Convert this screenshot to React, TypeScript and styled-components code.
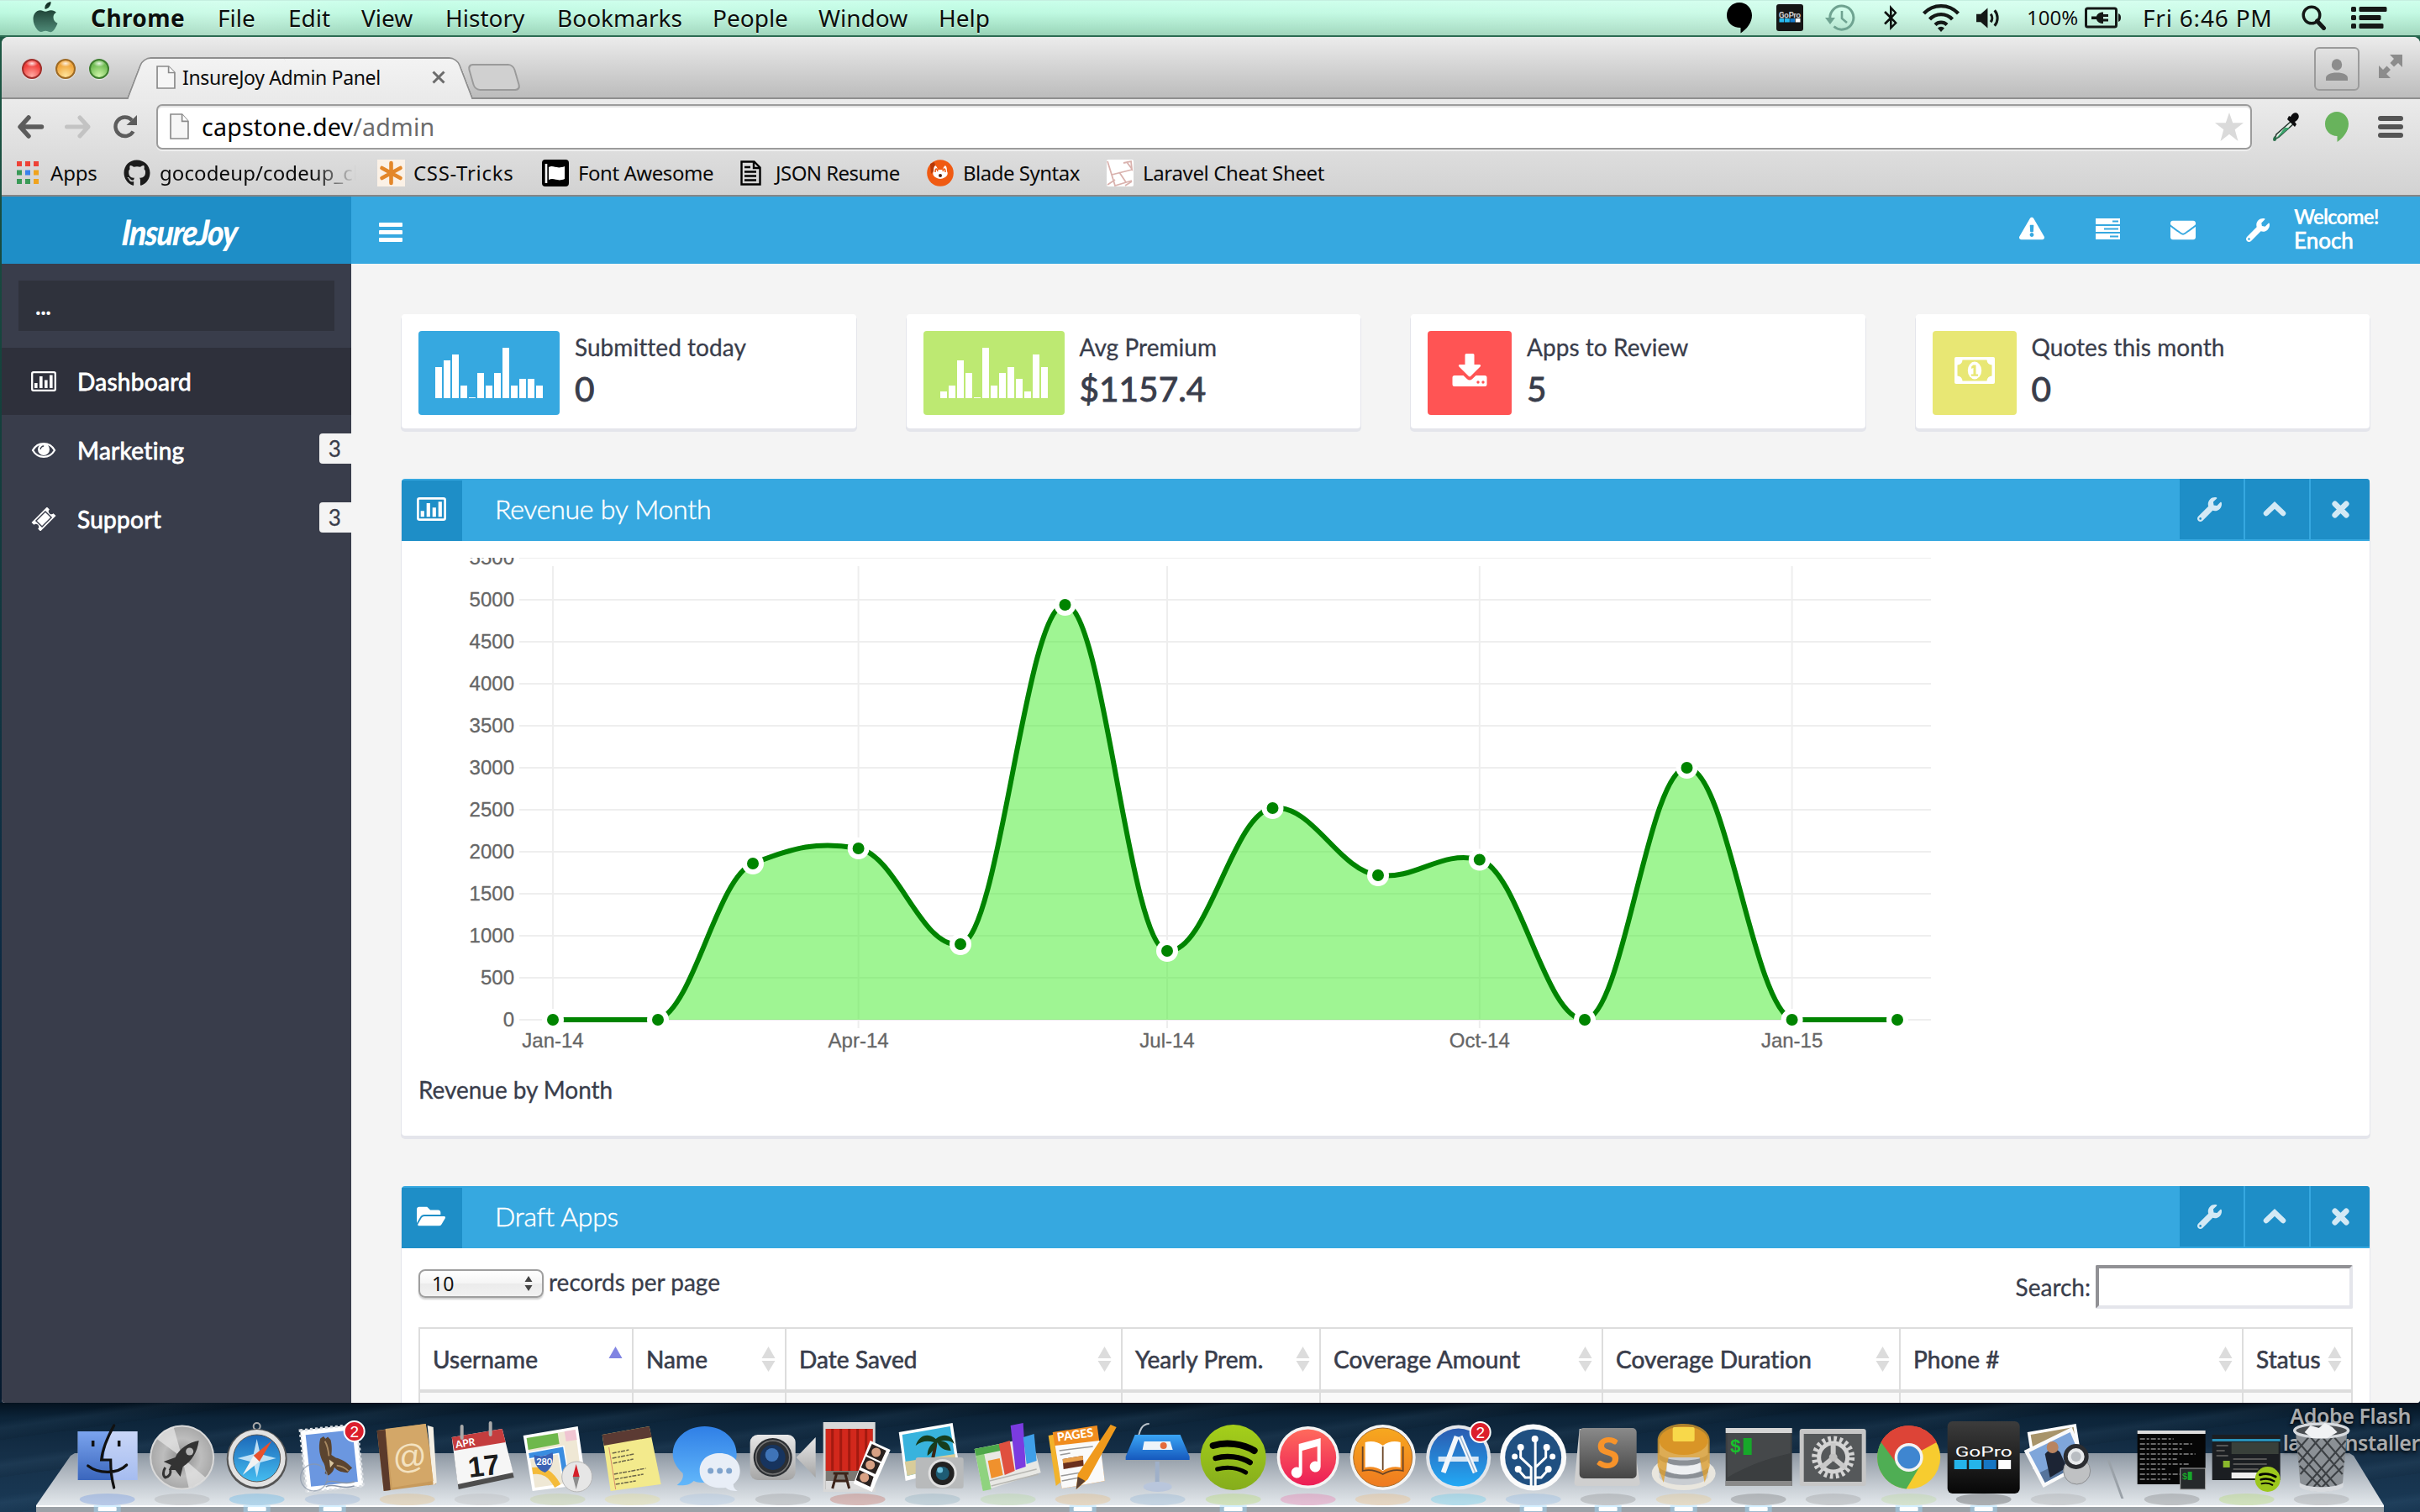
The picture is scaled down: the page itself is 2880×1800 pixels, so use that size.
import React from "react";
import styled, { createGlobalStyle, css } from "styled-components";
import {
  FaBluetoothB,
  FaEnvelope,
  FaExclamationTriangle,
  FaFolderOpen,
  FaGithub,
  FaWrench,
} from "react-icons/fa";

const system = `"Noto Sans", "Open Sans", sans-serif`;
const lato = `Lato, "Open Sans", sans-serif`;

const colors = {
  blue: "#36a8e0",
  blueDark: "#1e8ec7",
  slate: "#393d4b",
  slateDark: "#2f323c",
  page: "#f4f4f4",
  shadow: "#e4e5eb",
  line: "#dddddd",
};

const GlobalStyle = createGlobalStyle`
  * { box-sizing: border-box; }
  html, body { margin: 0; padding: 0; width: 2880px; height: 1800px; overflow: hidden; background: #0c2238; }
  svg { display: block; }
`;

/* ---------- desktop ---------- */

const Desktop = styled.div`
  display: flex;
  flex-direction: column;
  width: 2880px;
  height: 1800px;
  overflow: hidden;
  background: linear-gradient(180deg, #1f5b45 0, #14403c 500px, #0d2c44 1100px, #061a2e 1672px, #17324b 1740px, #1b3a56 1800px);
`;

const MenuBar = styled.header`
  display: flex;
  flex: none;
  align-items: center;
  height: 44px;
  padding: 0 0 1px 38px;
  color: #0b0f0d;
  font: 28px/38px ${system};
  border-top: 1px solid #c5efe0;
  border-bottom: 2px solid #2c6b52;
  background:
    linear-gradient(90deg, rgba(255,255,255,0) 0%, rgba(255,255,255,.22) 9%, rgba(255,255,255,0) 17%, rgba(255,255,255,.12) 28%, rgba(255,255,255,0) 40%, rgba(255,255,255,.1) 55%, rgba(255,255,255,.3) 82%, rgba(255,255,255,.1) 100%),
    linear-gradient(180deg, #c9ffea 0%, #bdf9e0 35%, #a0dcc0 85%, #97d0b5 100%);
`;

const Slot = styled.div<{ $w: number; $bold?: boolean; $size?: number; $ls?: number }>`
  flex: none;
  width: ${(p) => p.$w}px;
  white-space: nowrap;
  text-shadow: 0 1px 1px rgba(255, 255, 255, 0.55);
  font-weight: ${(p) => (p.$bold ? 700 : 400)};
  font-size: ${(p) => p.$size ?? 28}px;
  letter-spacing: ${(p) => p.$ls ?? 0}px;
`;

const Spacer = styled.div`
  flex: 1;
`;

/* ---------- browser chrome ---------- */

const Window = styled.section`
  display: flex;
  flex: none;
  flex-direction: column;
  height: 1626px;
  margin-left: 2px;
  overflow: hidden;
  border-radius: 8px 8px 4px 4px;
  background: ${colors.page};
`;

const TabStrip = styled.div`
  display: flex;
  flex: none;
  align-items: flex-end;
  height: 74px;
  padding-left: 24px;
  border-bottom: 2px solid #8e8e8e;
  background: linear-gradient(180deg, #ececec 0%, #d6d6d6 45%, #bcbcbc 100%);
`;

const Lights = styled.div`
  display: flex;
  gap: 16px;
  width: 130px;
  padding-bottom: 22px;
`;

const Light = styled.i<{ $hue: string; $edge: string; $glow: string }>`
  width: 24px;
  height: 24px;
  border: 2px solid ${(p) => p.$edge};
  border-radius: 50%;
  background:
    radial-gradient(ellipse 7px 4px at 50% 18%, rgba(255,255,255,.85), rgba(255,255,255,0)),
    radial-gradient(circle at 50% 90%, ${(p) => p.$glow} 0, ${(p) => p.$hue} 65%);
  box-shadow: 0 1px 1px rgba(255, 255, 255, 0.7);
`;

const Tab = styled.div`
  position: relative;
  z-index: 0;
  display: flex;
  align-items: center;
  width: 394px;
  height: 50px;
  margin: 0 0 -2px 4px;
  padding: 0 24px 3px 26px;
  font: 23px/30px ${system};
  color: #0c0c0c;
  letter-spacing: -0.35px;
  white-space: nowrap;

  &::before,
  &::after {
    content: "";
    position: absolute;
    z-index: -1;
    top: 0;
    bottom: 0;
    width: 52%;
    border-top: 2px solid #8e8e8e;
    background: linear-gradient(180deg, #f3f3f3, #eaeaea);
  }
  &::before {
    left: 0;
    border-left: 2px solid #8e8e8e;
    border-radius: 10px 0 0 0;
    transform: skewX(-21deg);
  }
  &::after {
    right: 0;
    border-right: 2px solid #8e8e8e;
    border-radius: 0 10px 0 0;
    transform: skewX(21deg);
  }
`;

const TabTitle = styled.span`
  flex: 1;
  padding-left: 8px;
`;

const NewTab = styled.div`
  width: 56px;
  height: 32px;
  margin: 0 0 8px 6px;
  border: 2px solid #9a9a9a;
  border-radius: 7px;
  background: #d0d0d0;
  transform: skewX(16deg);
`;

const ProfileButton = styled.div`
  display: flex;
  align-items: flex-end;
  justify-content: center;
  width: 54px;
  height: 52px;
  margin: 0 22px 8px 0;
  padding-bottom: 10px;
  border: 2px solid #9b9b9b;
  border-radius: 6px;
`;

const ExpandSlot = styled.div`
  width: 50px;
  padding-bottom: 22px;
`;

const Bars = styled.div`
  flex: none;
  background: linear-gradient(180deg, #ebebeb, #d2d2d2);
  border-bottom: 2px solid #858585;
`;

const Toolbar = styled.div`
  display: flex;
  align-items: center;
  height: 62px;
  padding: 6px 18px 2px 18px;
`;

const NavIcon = styled.div<{ $w: number }>`
  flex: none;
  width: ${(p) => p.$w}px;
`;

const Omnibox = styled.div`
  display: flex;
  flex: none;
  align-items: center;
  width: 2494px;
  height: 54px;
  padding: 0 8px 1px 14px;
  border: 2px solid #9c9c9c;
  border-radius: 7px;
  background: #fff;
  box-shadow: inset 0 2px 1px #e4e4e4, 0 2px 0 #efefef;
  font: 28.6px/36px ${system};
  letter-spacing: 0.2px;
  color: #6b6b6b;
`;

const Url = styled.span`
  flex: 1;
  padding-left: 15px;
  b {
    font-weight: 400;
    color: #000;
  }
`;

const Bookmarks = styled.nav`
  display: flex;
  align-items: center;
  height: 52px;
  padding-left: 18px;
  font: 24px/34px ${system};
  color: #0a0a0a;
`;

const Bookmark = styled.div<{ $w: number; $gap: number; $ls?: number; $fade?: boolean }>`
  display: flex;
  flex: none;
  align-items: center;
  gap: ${(p) => p.$gap}px;
  width: ${(p) => p.$w}px;
  white-space: nowrap;
  letter-spacing: ${(p) => p.$ls ?? 0}px;
  svg {
    flex: none;
  }
  ${(p) =>
    p.$fade &&
    css`
      span {
        mask-image: linear-gradient(90deg, #000 78%, transparent 99%);
      }
    `}
`;

/* ---------- page ---------- */

const TopBar = styled.div`
  display: flex;
  flex: none;
  height: 80px;
  background: ${colors.blue};
  color: #fff;
`;

const Logo = styled.div`
  display: flex;
  align-items: center;
  justify-content: center;
  width: 416px;
  padding: 4px 0 0 8px;
  background: ${colors.blueDark};
  span {
    font: italic 900 42px/60px ${lato};
    letter-spacing: -1.5px;
    transform: scaleX(0.88) skewX(-5deg);
  }
`;

const TopTools = styled.div`
  display: flex;
  flex: 1;
  align-items: center;
  padding: 0 0 4px 33px;
`;

const Burger = styled.div`
  display: flex;
  flex-direction: column;
  gap: 4px;
  padding-top: 8px;
  i {
    width: 28px;
    height: 5px;
    border-radius: 1px;
    background: #fff;
  }
`;

const TopIcon = styled.div`
  width: 90px;
`;

const Welcome = styled.div`
  display: flex;
  flex-direction: column;
  width: 150px;
  margin-left: -33px;
  font: 700 24px/28px ${lato};
  letter-spacing: -0.85px;
  white-space: nowrap;
  b {
    font-weight: 400;
    font-size: 26px;
    letter-spacing: 0;
    -webkit-text-stroke: 0.7px #fff;
  }
`;

const Body = styled.div`
  display: flex;
  flex: 1;
  min-height: 0;
`;

const Sidebar = styled.aside`
  flex: none;
  width: 416px;
  background: ${colors.slate};
  color: #fff;
  font: 28px/40px ${lato};
`;

const SideSearch = styled.div`
  height: 60px;
  margin: 20px;
  padding-left: 20px;
  background: ${colors.slateDark};
  font-weight: 700;
  line-height: 60px;
  letter-spacing: -0.5px;
`;

const SideItem = styled.div<{ $active?: boolean }>`
  display: flex;
  align-items: center;
  height: 80px;
  margin-bottom: 2px;
  padding: 0 0 1px 35px;
  background: ${(p) => (p.$active ? "#2e303b" : "transparent")};
  letter-spacing: 0.3px;
  -webkit-text-stroke: 0.8px #fff;
  svg {
    flex: none;
    width: 30px;
  }
  span {
    flex: 1;
    padding-left: 25px;
  }
`;

const SideBadge = styled.em`
  width: 38px;
  height: 36px;
  margin-bottom: 3px;
  padding-right: 1px;
  border-radius: 4px 0 0 4px;
  background: ${colors.page};
  color: ${colors.slate};
  font: 26px/36px ${lato};
  text-align: center;
  -webkit-text-stroke: 0.3px ${colors.slate};
`;

const Content = styled.main`
  display: flex;
  flex: 1;
  flex-direction: column;
  gap: 60px;
  padding: 60px 60px 0;
  background: ${colors.page};
  color: ${colors.slate};
  font: 28px/40px ${lato};
`;

const Cards = styled.div`
  display: grid;
  grid-template-columns: repeat(4, 1fr);
  gap: 60px;
`;

const Card = styled.div`
  display: flex;
  height: 136px;
  padding: 20px;
  border-radius: 4px;
  background: #fff;
  box-shadow: 0 3px 0 1px ${colors.shadow};
`;

const Tile = styled.div<{ $bg: string; $w: number }>`
  display: flex;
  flex: none;
  justify-content: center;
  align-items: center;
  width: ${(p) => p.$w}px;
  height: 100px;
  padding-bottom: 6px;
  border-radius: 4px;
  background: ${(p) => p.$bg};
`;

const Spark = styled.div`
  display: flex;
  align-items: flex-end;
  align-self: flex-start;
  gap: 2px;
  height: 60px;
  margin-top: 20px;
`;

const SparkBar = styled.i`
  width: 8px;
  background: #fff;
`;

const CardText = styled.div`
  padding-left: 18px;
  white-space: nowrap;
  letter-spacing: 0.05px;
`;

const CardLabel = styled.div`
  line-height: 38px;
  -webkit-text-stroke: 0.3px ${colors.slate};
`;

const CardValue = styled.div`
  font-size: 40.5px;
  line-height: 62px;
  -webkit-text-stroke: 0.9px ${colors.slate};
`;

const Panel = styled.section<{ $h?: number }>`
  flex: none;
  height: ${(p) => (p.$h ? `${p.$h}px` : "auto")};
  border-radius: 4px;
  background: #fff;
  box-shadow: 0 3px 0 1px ${colors.shadow};
`;

const PanelHead = styled.div`
  display: flex;
  height: 74px;
  overflow: hidden;
  border-radius: 4px 4px 0 0;
  background: ${colors.blue};
  color: #fff;
`;

const HeadIcon = styled.div`
  display: flex;
  align-items: center;
  width: 72px;
  height: 72px;
  margin-top: 2px;
  padding: 0 0 4px 18px;
  background: ${colors.blueDark};
`;

const HeadTitle = styled.h2`
  flex: 1;
  margin: 0;
  padding-left: 39px;
  font: 300 32px/72px ${lato};
  letter-spacing: -0.25px;
  -webkit-text-stroke: 0.5px #fff;
`;

const HeadButton = styled.div<{ $w: number; $pad?: number }>`
  display: flex;
  align-items: center;
  justify-content: center;
  width: ${(p) => p.$w}px;
  height: 72px;
  margin-left: 2px;
  padding-right: ${(p) => p.$pad ?? 0}px;
  background: ${colors.blueDark};
  color: #d3e9f5;
`;

const PanelBody = styled.div`
  padding: 20px;
`;

const Caption = styled.div`
  line-height: 38px;
  letter-spacing: -0.05px;
  -webkit-text-stroke: 0.3px ${colors.slate};
`;

const TableTools = styled.div`
  display: flex;
  height: 52px;
  -webkit-text-stroke: 0.3px ${colors.slate};
`;

const RecordsPer = styled.div`
  display: flex;
  flex: 1;
  align-items: center;
  gap: 6px;
  height: 40px;
`;

const Select = styled.div`
  display: flex;
  align-items: center;
  justify-content: space-between;
  width: 149px;
  height: 34px;
  margin-top: 4px;
  padding: 0 11px 0 14px;
  border: 2px solid #9f9f9f;
  border-radius: 8px;
  background: linear-gradient(180deg, #fff 0%, #f5f5f5 48%, #ebebeb 52%, #f2f2f2 100%);
  box-shadow: 0 2px 2px rgba(0, 0, 0, 0.2);
  color: #111;
  font: 23px/28px ${system};
  -webkit-text-stroke: 0;
`;

const SearchLabel = styled.label`
  display: flex;
  align-items: center;
  gap: 6px;
`;

const SearchBox = styled.div`
  width: 306px;
  height: 52px;
  border: 4px solid;
  border-color: #919195 ${colors.shadow} ${colors.shadow} #919195;
  border-radius: 2px;
`;

const TableBox = styled.div`
  margin-top: 22px;
  border-top: 2px solid ${colors.line};
  border-right: 2px solid ${colors.line};
`;

const Row = styled.div<{ $bg: string; $h: number }>`
  display: grid;
  grid-template-columns: 254px 182px 400px 236px 336px 354px 408px 1fr;
  height: ${(p) => p.$h}px;
  background: ${(p) => p.$bg};
  & + & {
    border-top: 4px solid ${colors.line};
  }
`;

const Cell = styled.div`
  display: flex;
  align-items: center;
  justify-content: space-between;
  padding: 0 11px 1px 15px;
  border-left: 2px solid ${colors.line};
  white-space: nowrap;
  letter-spacing: 0.08px;
  -webkit-text-stroke: 0.6px ${colors.slate};
`;

/* ---------- dock ---------- */

const DockArea = styled.footer`
  position: relative;
  flex: 1;
  background:
    repeating-linear-gradient(172deg, rgba(255,255,255,0) 0 22px, rgba(120,160,190,.07) 30px, rgba(0,0,0,.06) 44px),
    linear-gradient(180deg, #04121f 0, #0c2439 18px, #152f47 60px, #1a3a57 130px);
`;

const Shelf = styled.div`
  position: absolute;
  left: 43px;
  top: 60px;
  width: 2794px;
  height: 62px;
  clip-path: polygon(41px 3px, 46px 0, 2753px 0, 2758px 3px, 100% 100%, 0 100%);
  background: linear-gradient(180deg, #8d97a2 0%, #a9b1ba 30%, #ccd2d8 70%, #e3e8ec 100%);
`;

const ShelfEdge = styled.div`
  position: absolute;
  left: 43px;
  top: 122px;
  width: 2794px;
  height: 8px;
  border-top: 2px solid #fff;
  background: #9ba1a7;
`;

const DesktopLabel = styled.div`
  position: absolute;
  right: 0;
  top: -1px;
  color: #a9abad;
  font: 600 25px/32px ${system};
  letter-spacing: -0.4px;
  text-align: right;
  white-space: nowrap;
  text-shadow: 0 2px 4px #000;
  span {
    display: block;
    padding-right: 11px;
  }
  span + span {
    padding: 0;
  }
`;

const DockRow = styled.div`
  position: absolute;
  left: 82.5px;
  top: 20px;
  display: flex;
`;

const DockCell = styled.svg`
  flex: none;
  width: 89.35px;
  height: 110px;
  overflow: visible;
`;

const DockGap = styled.div`
  width: 45px;
  height: 110px;
  display: flex;
  justify-content: center;
  align-items: center;
  i {
    width: 3px;
    height: 46px;
    margin-top: 32px;
    background: #9aa1a8;
    transform: skewX(20deg);
  }
`;

/* ---------- small drawings ---------- */

const PageIcon = ({ w, h }: { w: number; h: number }) => (
  <svg width={w} height={h} viewBox="0 0 22 30" preserveAspectRatio="none">
    <path d="M1 1h13l7 8v20H1z" fill="#f6f6f6" stroke="#8a8a8a" strokeWidth="1.6" />
    <path d="M14 1v8h7" fill="#fff" stroke="#8a8a8a" strokeWidth="1.6" />
  </svg>
);

const ChartIcon = ({ w = 30, h = 24 }: { w?: number; h?: number }) => (
  <svg width={w} height={h} viewBox="0 0 30 24" preserveAspectRatio="none">
    <rect x="1.2" y="1.2" width="27.6" height="21.6" rx="1.6" fill="none" stroke="#fff" strokeWidth="2.3" />
    <path d="M4 14h3.600v6H4zM10 6h3.600v14H10zM16 10.500h3.600V20H16zM22 4.500h3.600V20H22z" fill="#fff" />
  </svg>
);

const EyeIcon = () => (
  <svg width="30" height="20" viewBox="0 0 30 20">
    <path d="M2 10C8 -.5 22 -.5 28 10 22 20.500 8 20.500 2 10z" fill="none" stroke="#fff" strokeWidth="2.2" />
    <circle cx="15" cy="9" r="7" fill="#fff" />
    <path d="M11.200 9a4 4 0 0 1 4-4" fill="none" stroke={colors.slate} strokeWidth="1.4" />
  </svg>
);

const TicketIcon = () => (
  <svg width="30" height="28" viewBox="0 0 30 28">
    <g transform="rotate(-45 15 14)">
      <path d="M2 6.500h26v4.200a3.300 3.300 0 0 0 0 6.600v4.200H2v-4.200a3.300 3.300 0 0 0 0-6.600z" fill="#fff" />
      <rect x="7.200" y="9" width="15.600" height="10" fill="none" stroke={colors.slate} strokeWidth="1.400" />
    </g>
  </svg>
);

const TasksIcon = () => (
  <svg width="31" height="25" viewBox="0 0 31 25">
    <path d="M1 0h29v7H1zM1 9h29v7H1zM1 18h29v7H1z" fill="#fff" />
    <path d="M21 2.600h7v1.800h-7zM11 11.600h17v1.800H11zM18 20.600h10v1.800H18z" fill={colors.blue} />
  </svg>
);

const DownloadIcon = () => (
  <svg width="42" height="40" viewBox="0 0 42 40">
    <path d="M17 0h8a1.500 1.500 0 0 1 1.500 1.500V13h6.300a1.400 1.400 0 0 1 1 2.300L22 27a1.500 1.500 0 0 1-2 0L8.200 15.300a1.400 1.400 0 0 1 1-2.300h6.300V1.500A1.500 1.500 0 0 1 17 0z" fill="#fff" />
    <path d="M3 26h10.500l4.500 4.300a4.200 4.200 0 0 0 6 0L28.500 26H39a2.500 2.500 0 0 1 2.500 2.500v8A2.500 2.500 0 0 1 39 39H3a2.500 2.500 0 0 1-2.500-2.500v-8A2.500 2.500 0 0 1 3 26z" fill="#fff" />
    <circle cx="31" cy="34" r="1.700" fill="#ff5454" />
    <circle cx="37" cy="34" r="1.700" fill="#ff5454" />
  </svg>
);

const MoneyIcon = () => (
  <svg width="48" height="32" viewBox="0 0 48 32">
    <rect width="48" height="32" rx="2" fill="#fff" />
    <path d="M9.500 3.400h29a6 6 0 0 0 6 6v13.200a6 6 0 0 0-6 6h-29a6 6 0 0 0-6-6V9.400a6 6 0 0 0 6-6z" fill="#e8e774" />
    <ellipse cx="24" cy="16" rx="8.200" ry="10.400" fill="#fff" />
    <path d="M22.300 9.500h3.200v11h2.600v2.200h-8.300v-2.200h2.700v-7.600l-2.400 1.200v-2.500z" fill="#e8e774" />
  </svg>
);

const SortIcon = ({ active }: { active?: boolean }) => (
  <svg width="17" height="30" viewBox="0 0 16 30">
    <path d="M8 0l8 14H0z" fill={active ? "#8084e2" : "#dcdcdc"} />
    {!active && <path d="M8 30l8-13H0z" fill="#dcdcdc" />}
  </svg>
);

const AppleLogo = () => (
  <svg width="32" height="38" viewBox="0 0 32 38">
    <defs>
      <linearGradient id="apple" x1="0" y1="0" x2="0" y2="1">
        <stop offset="0" stopColor="#0e2a20" />
        <stop offset="1" stopColor="#4f8a77" />
      </linearGradient>
    </defs>
    <path
      d="M22.500 0c.4 3-1 5.400-2.600 6.900-1.500 1.300-3.200 1.900-4.600 1.700-.3-3 1.100-5.200 2.500-6.500C19.200.9 21 .1 22.500 0zM28.900 12.800c-2.300 1.500-3.500 3.400-3.400 6 .1 3.400 1.900 5.700 5 7-1.300 3.600-3 6.500-5 8.600-1.300 1.300-2.700 1.900-4.200 1.700-1.900-.2-3-1.300-5-1.300s-3.400 1.100-5.300 1.300c-1.700.1-3.100-.8-4.500-2.500C3.200 29.700 1.500 25 1.500 20.500c0-6 3.700-10.200 8.400-10.300 2.500 0 4 1.600 6.200 1.600s3.700-1.700 6.800-1.600c2.400.1 4.500 1.100 6 2.600z"
      fill="url(#apple)"
    />
  </svg>
);

const GoProMini = () => (
  <svg width="32" height="32" viewBox="0 0 32 32">
    <rect width="32" height="32" rx="3" fill="#151515" />
    <text x="16" y="16" textAnchor="middle" fontFamily="Roboto, sans-serif" fontSize="9.500" fill="#eee" textLength="26">
      GoPro
    </text>
    <path d="M3.500 17h5.800v4.500H3.500zM10 17h5.800v4.500H10z" fill="#28b9ee" />
    <path d="M16.300 17h5.800v4.500h-5.800z" fill="#1479c9" />
    <path d="M22.700 17h5.800v4.500h-5.800z" fill="#fff" />
  </svg>
);

const ink = "#141816";

const menus: [string, number, boolean?][] = [
  ["Chrome", 151, true],
  ["File", 84],
  ["Edit", 87],
  ["View", 100],
  ["History", 133],
  ["Bookmarks", 185],
  ["People", 126],
  ["Window", 143],
  ["Help", 80],
];

const TopMenu = () => (
  <MenuBar>
    <Slot $w={70}>
      <AppleLogo />
    </Slot>
    {menus.map(([name, w, bold]) => (
      <Slot key={name} $w={w} $bold={bold} $ls={bold ? 0.4 : 0}>
        {name}
      </Slot>
    ))}
    <Spacer />
    <Slot $w={60}>
      <svg width="32" height="38" viewBox="0 0 32 38">
        <path d="M16 1c8.500 0 15 6.800 15 15.200C31 25 25 32.500 17.500 37.500V31C8 31 1 25 1 16.200 1 7.800 7.500 1 16 1z" fill="#000" />
      </svg>
    </Slot>
    <Slot $w={58}>
      <GoProMini />
    </Slot>
    <Slot $w={69}>
      <svg width="36" height="32" viewBox="0 0 36 32" fill="none" stroke="#6fa391" strokeWidth="3">
        <path d="M6 18a14 14 0 1 1 4.500 8.500" />
        <path d="M20 8v9l6 5" strokeWidth="2.600" />
        <path d="M0 16h12l-6 8z" fill="#6fa391" stroke="none" />
      </svg>
    </Slot>
    <Slot $w={46}>
      <FaBluetoothB size={30} style={{ marginLeft: -6 }} />
    </Slot>
    <Slot $w={64}>
      <svg width="46" height="34" viewBox="0 0 46 34" fill="none" stroke={ink} strokeWidth="4.200">
        <path d="M2.500 12a28 28 0 0 1 41 0" />
        <path d="M9.500 19a18.500 18.500 0 0 1 27 0" />
        <path d="M16 25.500a10 10 0 0 1 14 0" />
        <path d="M23 34l-4-4.500a5.500 5.500 0 0 1 8 0z" fill={ink} stroke="none" />
      </svg>
    </Slot>
    <Slot $w={61}>
      <svg width="31" height="27" viewBox="0 0 30 26" fill="none" stroke={ink} strokeWidth="3">
        <path d="M1 8.500h5l8-7v23l-8-7H1z" fill={ink} stroke="none" />
        <path d="M17.500 8.500a7 7 0 0 1 0 9" />
        <path d="M22 4a14 14 0 0 1 0 18" />
      </svg>
    </Slot>
    <Slot $w={68} $size={24}>
      100%
    </Slot>
    <Slot $w={70}>
      <svg width="46" height="26" viewBox="0 0 46 26">
        <rect x="2.500" y="2" width="36" height="22" rx="2" fill="none" stroke={ink} strokeWidth="3" />
        <path d="M41 8c4 1 4 9 0 10z" fill={ink} />
        <path d="M9 11.500h6c1-3.500 4-5 8-5V9h6v3h-6v2.500h6v3h-6v2.500c-4 0-7-1.500-8-5H9z" fill={ink} />
      </svg>
    </Slot>
    <Slot $w={187} $ls={0.8}>
      Fri 6:46 PM
    </Slot>
    <Slot $w={60}>
      <svg width="32" height="30" viewBox="0 0 32 30" fill="none" stroke={ink}>
        <circle cx="14" cy="12" r="9.800" strokeWidth="3.400" />
        <path d="M20.500 19l8 8.500" strokeWidth="5" strokeLinecap="round" />
      </svg>
    </Slot>
    <Slot $w={83}>
      <svg width="44" height="28" viewBox="0 0 44 28" fill={ink}>
        <rect x="1" y="1" width="6" height="6" rx="1.500" />
        <rect x="1" y="11" width="6" height="6" rx="1.500" />
        <rect x="1" y="21" width="6" height="6" rx="1.500" />
        <rect x="10.500" y="1" width="33" height="6" rx="1.500" />
        <rect x="10.500" y="11" width="26" height="6" rx="1.500" />
        <rect x="10.500" y="21" width="29" height="6" rx="1.500" />
      </svg>
    </Slot>
  </MenuBar>
);

const BrowserChrome = () => (
  <>
    <TabStrip>
      <Lights>
        <Light $hue="#f0403c" $glow="#ffa8a0" $edge="#a1302c" />
        <Light $hue="#f0a63c" $glow="#ffe39a" $edge="#9e6a24" />
        <Light $hue="#72bd55" $glow="#cdf5a8" $edge="#3f7f30" />
      </Lights>
      <Tab>
        <PageIcon w={23} h={28} />
        <TabTitle>InsureJoy Admin Panel</TabTitle>
        <svg width="16" height="16" viewBox="0 0 16 16" stroke="#6b6b6b" strokeWidth="3">
          <path d="M1.500 1.500l13 13M14.500 1.500l-13 13" />
        </svg>
      </Tab>
      <NewTab />
      <Spacer />
      <ProfileButton>
        <svg width="26" height="26" viewBox="0 0 26 26" fill="#8c8c8c">
          <ellipse cx="13" cy="7" rx="6.200" ry="6.800" />
          <path d="M0 26v-3c0-4 5-6.500 13-6.500s13 2.500 13 6.500v3z" />
        </svg>
      </ProfileButton>
      <ExpandSlot>
        <svg width="30" height="30" viewBox="0 0 30 30" fill="#8c8c8c">
          <path d="M14 1h15v15l-5-5-5 4.500L14.500 11 19 6z" />
          <path d="M1 14l5 5 4.500-4.500L15 19l-5 5 5 5H1z" />
        </svg>
      </ExpandSlot>
    </TabStrip>
    <Bars>
      <Toolbar>
        <NavIcon $w={56}>
          <svg width="33" height="28" viewBox="0 0 33 28" fill="none" stroke="#5c5c5c" strokeWidth="5.500" strokeLinecap="round" strokeLinejoin="round">
            <path d="M14 3L4 14l10 11M5 14h24.500" />
          </svg>
        </NavIcon>
        <NavIcon $w={58}>
          <svg width="33" height="28" viewBox="0 0 33 28" fill="none" stroke="#c3c3c3" strokeWidth="5" strokeLinecap="round" strokeLinejoin="round">
            <path d="M19 3l10 11-10 11M28 14H3.500" />
          </svg>
        </NavIcon>
        <NavIcon $w={52}>
          <svg width="30" height="28" viewBox="0 0 30 28" fill="none" stroke="#5c5c5c" strokeWidth="4.400">
            <path d="M24.500 19.500A11.300 11.300 0 1 1 23 6" />
            <path d="M29 0v12H16.500z" fill="#5c5c5c" stroke="none" />
          </svg>
        </NavIcon>
        <Omnibox>
          <PageIcon w={23} h={31} />
          <Url>
            <b>capstone.dev</b>/admin
          </Url>
          <svg width="34" height="34" viewBox="0 0 34 34">
            <path d="M17 0l4.200 12.300H34l-10.300 8L27.500 34 17 25.700 6.500 34l3.800-13.700L0 12.300h12.800z" fill="#dadada" />
          </svg>
        </Omnibox>
        <Spacer />
        <NavIcon $w={61}>
          <svg width="34" height="36" viewBox="0 0 34 36">
            <path d="M24 11l3 3L9 30l-5 3 2-6z" fill="#e8f5ec" stroke="#2c3a33" strokeWidth="1.600" />
            <path d="M16 19h6L9 30l-4 3z" fill="#3ba46c" />
            <path d="M19 9l9 9 2-3-2-3c4-2 6-6 4-9s-7-2-9 3l-2-1z" fill="#0d0d0f" />
            <path d="M4 29c3 3 2 6 0 6s-3-3 0-6z" fill="#27704a" />
          </svg>
        </NavIcon>
        <NavIcon $w={65}>
          <svg width="34" height="36" viewBox="0 0 34 36">
            <path d="M17 0c8 0 14 6.500 14 14.500C31 23 25 31 17.500 36v-7C9 29 3 22.500 3 14.500S9 0 17 0z" fill="#68b35c" />
          </svg>
        </NavIcon>
        <NavIcon $w={33}>
          <svg width="32" height="28" viewBox="0 0 32 28" fill="#545454">
            <rect x="1" y="1" width="30" height="6" rx="3" />
            <rect x="1" y="11" width="30" height="6" rx="3" />
            <rect x="1" y="21" width="30" height="6" rx="3" />
          </svg>
        </NavIcon>
      </Toolbar>
      <Bookmarks>
        <Bookmark $w={127} $gap={13} $ls={-0.2}>
          <svg width="27" height="28" viewBox="0 0 27 28">
            <path d="M0 0h6v6H0zM10 0h6v6h-6zM20 0h6v6h-6z" fill="#ee4237" />
            <path d="M0 10.500h6v6H0zM0 21h6v6H0zM10 21h6v6h-6z" fill="#3a9a57" />
            <path d="M10 10.500h6v6h-6z" fill="#3a82ec" />
            <path d="M20 10.500h6v6h-6zM20 21h6v6h-6z" fill="#f0a31d" />
          </svg>
          Apps
        </Bookmark>
        <Bookmark $w={302} $gap={11} $fade $ls={0.1}>
          <FaGithub size={32} color="#1b1b1b" />
          <span>gocodeup/codeup_cl</span>
        </Bookmark>
        <Bookmark $w={196} $gap={10} $ls={0.7}>
          <svg width="33" height="32" viewBox="0 0 33 32">
            <rect width="33" height="32" fill="#fbf1e6" />
            <g stroke="#e3872a" strokeWidth="4.600" strokeLinecap="round">
              <path d="M16.500 4v24M5.500 10l22 12M27.500 10l-22 12" />
            </g>
          </svg>
          CSS-Tricks
        </Bookmark>
        <Bookmark $w={236} $gap={11} $ls={-0.45}>
          <svg width="32" height="32" viewBox="0 0 32 32">
            <rect width="32" height="32" rx="4" fill="#000" />
            <path d="M5 5v23" stroke="#fff" strokeWidth="2.600" />
            <path d="M8 9c6-3 9 3 19-1v15c-9 4-12-2-19 1z" fill="#fff" />
          </svg>
          Font Awesome
        </Bookmark>
        <Bookmark $w={222} $gap={17} $ls={-0.55}>
          <svg width="25" height="30" viewBox="0 0 25 30" fill="none" stroke="#000" strokeWidth="2.400">
            <path d="M1.500 1.500h15l7 7v20h-22z" />
            <path d="M16 2v7h7M5 8h7M5 13.500h14M5 18.500h14M5 23.500h14" />
          </svg>
          JSON Resume
        </Bookmark>
        <Bookmark $w={214} $gap={11} $ls={-0.5}>
          <svg width="32" height="32" viewBox="0 0 32 32">
            <circle cx="16" cy="16" r="15.800" fill="#f05a12" />
            <path d="M4 5l5-2 2 8-6 6z" fill="#b83806" />
            <path d="M8 14C8 6 11 5 13 12h6c2-7 5-6 5 2 2 3 0 8-8 9-8-1-10-6-8-9z" fill="#fff" />
            <path d="M10 15c0-5 2-5 3-1M19 14c1-4 3-4 3 1" stroke="#f05a12" strokeWidth="1.600" fill="none" />
            <circle cx="16" cy="19" r="2" fill="#5b2410" />
          </svg>
          Blade Syntax
        </Bookmark>
        <Bookmark $w={300} $gap={11} $ls={-0.35}>
          <svg width="32" height="32" viewBox="0 0 32 32">
            <rect width="32" height="32" rx="2" fill="#fff" />
            <path d="M1 2l5 16 24-6M6 18l4 13 20-6M20 4l9-2 1 9-6-8M15 15l8 12M1 30l9-6M30 26l-8 5" fill="none" stroke="#d9b2ae" strokeWidth="1.800" />
          </svg>
          Laravel Cheat Sheet
        </Bookmark>
      </Bookmarks>
    </Bars>
  </>
);

/* ---------- revenue chart ---------- */

const zeroY = 1214;
const points: [number, number][] = [
  [658, 1214],
  [783, 1214],
  [896, 1028],
  [1021.6, 1010],
  [1143, 1124],
  [1267.5, 720],
  [1389, 1132],
  [1514.5, 962],
  [1640, 1042],
  [1760.8, 1023.5],
  [1886, 1214],
  [2007.5, 914],
  [2132.6, 1214],
  [2258, 1214],
];

/* The tangent at a point bisects the angles of its two neighbouring segments. */
const smoothPath = (pts: [number, number][]) => {
  const last = pts.length - 1;
  const angle = (a: [number, number], b: [number, number]) => Math.atan2(b[1] - a[1], b[0] - a[0]);
  const slope = pts.map((p, i) => {
    if (i === 0 || i === last) return 0;
    return 0.6 * Math.tan((angle(pts[i - 1], p) + angle(p, pts[i + 1])) / 2);
  });
  let d = `M${pts[0][0]} ${pts[0][1]}`;
  for (let i = 1; i <= last; i++) {
    const [x0, y0] = pts[i - 1];
    const [x1, y1] = pts[i];
    const step = (x1 - x0) * 0.38;
    const c0 = Math.min(zeroY, y0 + step * slope[i - 1]);
    const c1 = Math.min(zeroY, y1 - step * slope[i]);
    d += `C${x0 + step} ${c0} ${x1 - step} ${c1} ${x1} ${y1}`;
  }
  return d;
};

const curve = smoothPath(points);
const monthTicks: [string, number][] = [
  ["Jan-14", 658],
  ["Apr-14", 1021.6],
  ["Jul-14", 1389],
  ["Oct-14", 1760.8],
  ["Jan-15", 2132.6],
];

const ChartSvg = styled.svg`
  overflow: hidden;
  text {
    font: 24px "Liberation Sans", sans-serif;
    fill: #666;
    stroke: #666;
    stroke-width: 0.3px;
  }
`;

const RevenueChart = () => (
  <ChartSvg width="1860" height="614" viewBox="498 664 1860 614">
    {Array.from({ length: 12 }, (_, i) => (
      <g key={i}>
        <path d={`M618 ${zeroY - i * 50}H2298`} stroke="#eeeeee" strokeWidth="2" />
        <text x="612" y={zeroY - i * 50 + 8} textAnchor="end">
          {i * 500}
        </text>
      </g>
    ))}
    {monthTicks.map(([label, x]) => (
      <g key={label}>
        <path d={`M${x} 674V1224`} stroke="#eeeeee" strokeWidth="2" />
        <text x={x} y="1247" textAnchor="middle">
          {label}
        </text>
      </g>
    ))}
    <path d={`${curve}V${zeroY}H658Z`} fill="rgba(63,235,39,.5)" />
    <path d={curve} fill="none" stroke="#008400" strokeWidth="6" />
    {points.map(([x, y]) => (
      <circle key={x} cx={x} cy={y} r="10" fill="#008400" stroke="#fff" strokeWidth="6" />
    ))}
  </ChartSvg>
);

/* ---------- page parts ---------- */

const sparkA = [37, 45, 52, 15, 1, 30, 15, 30, 60, 15, 23, 23, 15];
const sparkB = [8, 15, 45, 30, 1, 60, 15, 30, 37, 23, 8, 52, 37];

const Sparkline = ({ data }: { data: number[] }) => (
  <Spark>
    {data.map((h, i) => (
      <SparkBar key={i} style={{ height: h }} />
    ))}
  </Spark>
);

const StatCard = ({ label, value, bg, w, children }: { label: string; value: string; bg: string; w: number; children: React.ReactNode }) => (
  <Card>
    <Tile $bg={bg} $w={w}>
      {children}
    </Tile>
    <CardText>
      <CardLabel>{label}</CardLabel>
      <CardValue>{value}</CardValue>
    </CardText>
  </Card>
);

const PanelHeader = ({ icon, title }: { icon: React.ReactNode; title: string }) => (
  <PanelHead>
    <HeadIcon>{icon}</HeadIcon>
    <HeadTitle>{title}</HeadTitle>
    <HeadButton $w={76} $pad={6}>
      <FaWrench size={29} />
    </HeadButton>
    <HeadButton $w={76} $pad={6}>
      <svg width="28" height="20" viewBox="0 0 28 20" fill="none" stroke="currentColor" strokeWidth="6.500">
        <path d="M4 15L14 5.500 24 15" strokeLinecap="round" />
      </svg>
    </HeadButton>
    <HeadButton $w={70}>
      <svg width="23" height="23" viewBox="0 0 24 24" stroke="currentColor" strokeWidth="7" strokeLinecap="round">
        <path d="M5 5l14 14M19 5L5 19" />
      </svg>
    </HeadButton>
  </PanelHead>
);

const columns = ["Username", "Name", "Date Saved", "Yearly Prem.", "Coverage Amount", "Coverage Duration", "Phone #", "Status"];

const AdminPage = () => (
  <>
    <TopBar>
      <Logo>
        <span>InsureJoy</span>
      </Logo>
      <TopTools>
        <Burger>
          <i />
          <i />
          <i />
        </Burger>
        <Spacer />
        <TopIcon>
          <FaExclamationTriangle size={30} />
        </TopIcon>
        <TopIcon>
          <TasksIcon />
        </TopIcon>
        <TopIcon>
          <FaEnvelope size={30} style={{ marginTop: 4 }} />
        </TopIcon>
        <TopIcon>
          <FaWrench size={28} style={{ marginTop: 4 }} />
        </TopIcon>
        <Welcome>
          Welcome!
          <b>Enoch</b>
        </Welcome>
      </TopTools>
    </TopBar>
    <Body>
      <Sidebar>
        <SideSearch>...</SideSearch>
        <SideItem $active>
          <ChartIcon />
          <span>Dashboard</span>
        </SideItem>
        <SideItem>
          <EyeIcon />
          <span>Marketing</span>
          <SideBadge>3</SideBadge>
        </SideItem>
        <SideItem>
          <TicketIcon />
          <span>Support</span>
          <SideBadge>3</SideBadge>
        </SideItem>
      </Sidebar>
      <Content>
        <Cards>
          <StatCard label="Submitted today" value="0" bg={colors.blue} w={168}>
            <Sparkline data={sparkA} />
          </StatCard>
          <StatCard label="Avg Premium" value="$1157.4" bg="#bde972" w={168}>
            <Sparkline data={sparkB} />
          </StatCard>
          <StatCard label="Apps to Review" value="5" bg="#ff5454" w={100}>
            <DownloadIcon />
          </StatCard>
          <StatCard label="Quotes this month" value="0" bg="#e8e774" w={100}>
            <MoneyIcon />
          </StatCard>
        </Cards>
        <Panel $h={782}>
          <PanelHeader icon={<ChartIcon w={35} h={28} />} title="Revenue by Month" />
          <PanelBody>
            <RevenueChart />
            <Caption>Revenue by Month</Caption>
          </PanelBody>
        </Panel>
        <Panel>
          <PanelHeader icon={<FaFolderOpen size={34} />} title="Draft Apps" />
          <PanelBody>
            <TableTools>
              <RecordsPer>
                <Select>
                  10
                  <svg width="10" height="18" viewBox="0 0 10 18" fill="#444">
                    <path d="M5 0l4.500 7h-9zM5 18l4.500-7h-9z" />
                  </svg>
                </Select>
                records per page
              </RecordsPer>
              <SearchLabel>
                Search:
                <SearchBox />
              </SearchLabel>
            </TableTools>
            <TableBox>
              <Row $bg="#fff" $h={72}>
                {columns.map((name, i) => (
                  <Cell key={name}>
                    {name}
                    <SortIcon active={i === 0} />
                  </Cell>
                ))}
              </Row>
              <Row $bg="#f9f9f9" $h={60}>
                {columns.map((name) => (
                  <Cell key={name} />
                ))}
              </Row>
            </TableBox>
          </PanelBody>
        </Panel>
      </Content>
    </Body>
  </>
);

/* ---------- dock icons (origin at the centre of each icon) ---------- */

const Grad = ({ id, from, to }: { id: string; from: string; to: string }) => (
  <linearGradient id={id} x1="0" y1="0" x2="0" y2="1">
    <stop offset="0" stopColor={from} />
    <stop offset="1" stopColor={to} />
  </linearGradient>
);

const Notice = ({ x, y }: { x: number; y: number }) => (
  <g>
    <circle cx={x} cy={y} r="12" fill="#dc1f2c" stroke="#fff" strokeWidth="2" />
    <text x={x} y={y + 7} textAnchor="middle" fontFamily="Liberation Sans, sans-serif" fontSize="19" fill="#fff">
      2
    </text>
  </g>
);

const Item = ({ glow, open, children }: { glow: string; open?: boolean; children: React.ReactNode }) => (
  <DockCell viewBox="-44.675 -45 89.35 110">
    <ellipse cx="0" cy="50" rx="33" ry="7" fill={glow} opacity=".28" />
    {children}
    {open && (
      <>
        <rect x="-16" y="57" width="32" height="8" fill="#9fdcff" opacity=".45" />
        <rect x="-11" y="59" width="22" height="5" rx="1" fill="#fff" />
      </>
    )}
  </DockCell>
);

const Gear = () => (
  <g>
    <circle r="17" fill="none" stroke="#d4d4d4" strokeWidth="5" />
    <circle r="22" fill="none" stroke="#d4d4d4" strokeWidth="7" strokeDasharray="3.600 3.310" />
    <circle r="5" fill="#c0c0c0" />
    <path d="M0-4V-17M3 3l12 10M-3 3l-12 10" stroke="#c9c9c9" strokeWidth="6" />
  </g>
);

const SpotifyMark = ({ k }: { k: number }) => (
  <g transform={`scale(${k})`} fill="none" stroke="#000" strokeLinecap="round">
    <path d="M-24-14C-8-19 12-16 25-8" strokeWidth="8" />
    <path d="M-21 1C-8-3 9-1 20 6" strokeWidth="6.500" />
    <path d="M-19 14C-8 11 5 12 15 18" strokeWidth="5" />
  </g>
);

const Dock = () => (
  <DockArea>
    <Shelf />
    <ShelfEdge />
    <DesktopLabel>
      <span>Adobe Flash</span>
      <span>layer Installer</span>
    </DesktopLabel>
    <DockRow>
      <Item glow="#4c7fe0" open>
        <defs>
          <Grad id="fi" from="#7ba4ee" to="#3a66bd" />
          <Grad id="fi2" from="#c9d6f7" to="#a5bcf0" />
        </defs>
        <rect x="-35" y="-31" width="71" height="58" fill="url(#fi2)" />
        <path d="M-35-31H4C-2-15-4-5-4 3H5c0 8 0 16 1 24h-41z" fill="url(#fi)" />
        <path d="M8-38C-2-20-6-8-7 3H4C4 15 5 25 8 36M-23 10C-10 20 12 20 23 9" fill="none" stroke="#111" strokeWidth="3.200" strokeLinecap="round" />
        <path d="M-17-20v7M14-20v7" stroke="#111" strokeWidth="3.500" />
      </Item>
      <Item glow="#999">
        <defs>
          <radialGradient id="lp">
            <stop offset="0" stopColor="#888" />
            <stop offset=".6" stopColor="#bdbdbd" />
            <stop offset="1" stopColor="#a8a8a8" />
          </radialGradient>
        </defs>
        <circle r="37.500" fill="url(#lp)" stroke="#d9d9d9" strokeWidth="2" />
        <path d="M0 0L-30-22A37 37 0 0 1-10-36zM0 0L28 24A37 37 0 0 1 8 36z" fill="#e8e8e8" opacity=".7" />
        <path d="M20-20C8-18-4-10-8 0l-14 5 9 4-3 6 8 0 6 8 3-12C12 4 18-6 20-20z" fill="#333" />
        <circle cx="9" cy="-7" r="4.500" fill="#b5b5b5" />
        <path d="M-20 12c-3 5-3 10 0 12 5-1 7-5 6-9" fill="none" stroke="#333" strokeWidth="3" />
      </Item>
      <Item glow="#3aa8e8" open>
        <defs>
          <Grad id="sf" from="#1b67b8" to="#45bdf0" />
        </defs>
        <circle cy="-37" r="4" fill="none" stroke="#aaa" strokeWidth="2" />
        <circle cy="2" r="36" fill="#555" />
        <circle cy="1" r="34" fill="#e2e2e2" />
        <circle cy="1" r="28" fill="url(#sf)" stroke="#555" strokeWidth="1" />
        <path d="M0-22l4 18 19 5-19 5-4 18-4-18-19-5 19-5z" fill="#d7eefb" opacity=".85" />
        <path d="M18-20L3 5-4-2z" fill="#e8502c" />
        <path d="M-17 21L-4-2l7 7z" fill="#f2f2f2" />
      </Item>
      <Item glow="#7da0d0" open>
        <g transform="rotate(-6)">
          <rect x="-32" y="-33" width="62" height="68" fill="#6b97e0" stroke="#fff" strokeWidth="6" />
          <rect x="-35" y="-36" width="68" height="74" fill="none" stroke="#d9dde2" strokeWidth="3" strokeDasharray="3 3" />
          <path d="M-12-24l4-2 2 3 3-2 3 4c1 8 0 14-1 18l5 4c6 2 12 6 18 14l-3 2-3 3-4-1c-6-1-9-4-11-7-1 4-4 7-8 9l-4-3c2-4 1-9 0-12-4-8-5-20-1-30z" fill="#5b442f" />
          <path d="M-4 2l5 5-5 5z" fill="#d9c6a0" />
          <path d="M-7-20c3 6 3 12 3 18M4 10c5 1 9 3 13 8" stroke="#a98a62" strokeWidth="1.800" fill="none" />
        </g>
        <circle cx="-22" cy="24" r="16" fill="none" stroke="#8b97a8" strokeWidth="1.500" opacity=".7" />
        <path d="M-8 30c10-5 20 4 34-1M-8 35c10-5 20 4 34-1" fill="none" stroke="#8b97a8" strokeWidth="1.500" />
        <Notice x={26} y={-31} />
      </Item>
      <Item glow="#e5b566">
        <path d="M-36-32L22-40l12 72-62 8z" fill="#c79a5c" />
        <path d="M-36-32l10-1 6 72-8 1z" fill="#5b3a2b" />
        <path d="M24-38l7 2 4 66-4 3z" fill="#f4efe4" />
        <path d="M-26-34L22-40l9 68-49 8z" fill="#d3a768" />
        <text x="3" y="13" textAnchor="middle" fontFamily="Liberation Sans, sans-serif" fontSize="40" fill="#f3e2c0" transform="rotate(-6)">
          @
        </text>
      </Item>
      <Item glow="#b0b0b0">
        <path d="M-36-24L24-34 38 24-28 38z" fill="#4e4e4e" />
        <path d="M-36-24L24-34 37 18-29 32z" fill="#f6f6f6" />
        <path d="M-36-24L24-34l4 16-61 10z" fill="#c43d3e" />
        <path d="M-24-37v14M10-41v14" stroke="#aaa" strokeWidth="4" strokeLinecap="round" />
        <text x="-31" y="-11" fontFamily="Lato, sans-serif" fontWeight="700" fontSize="12" fill="#fff" transform="rotate(-9 -31 -11)">
          APR
        </text>
        <text x="1" y="22" textAnchor="middle" fontFamily="Liberation Sans, sans-serif" fontWeight="700" fontSize="34" fill="#1c1c1c" transform="rotate(-7)">
          17
        </text>
      </Item>
      <Item glow="#b9c983">
        <path d="M-41-26L24-37 34 32-30 40z" fill="#fff" />
        <path d="M-37-23L21-33 29 28-27 36z" fill="#efe8d5" />
        <path d="M-37-23L0-29 2-16-35-9z" fill="#6fb84c" />
        <path d="M8-31l13-2 2 12-13 2z" fill="#f0c5d2" />
        <path d="M-34-2L4-9c2 12 4 22 6 38" fill="none" stroke="#fff" strokeWidth="9" />
        <path d="M-34-2L4-9c2 12 4 22 6 38" fill="none" stroke="#3a8de0" strokeWidth="6" />
        <path d="M-30 16c14-2 22 4 30 18" fill="none" stroke="#f4bb3a" strokeWidth="8" />
        <path d="M-28-3c8 3 14 1 22-3 2 12-2 20-9 24-8-3-13-9-13-21z" fill="#3b63b5" />
        <text x="-16" y="9" textAnchor="middle" fontFamily="Lato, sans-serif" fontWeight="700" fontSize="11" fill="#fff">
          280
        </text>
        <circle cx="23" cy="23" r="18" fill="#e6e6e6" stroke="#b5b5b5" />
        <path d="M22 8l4 15h-8z" fill="#d5202a" />
        <path d="M22 38l4-15h-8z" fill="#8d8d8d" />
      </Item>
      <Item glow="#e6dc7a">
        <path d="M-36-27L20-37 34 32-26 40z" fill="#f3ea8c" />
        <path d="M-36-27L20-37l3 13-57 10z" fill="#5b3a33" />
        <path d="M-24-5l20-4M-24 1l26-5M-23 7L1 2M-22 20l38-7M-21 26l34-6M-20 32l24-4" stroke="#6b6548" strokeWidth="1.500" strokeDasharray="5 1.500 3 1" />
        <path d="M-28-12l8 50" stroke="#d98b6a" strokeWidth="1" />
      </Item>
      <Item glow="#9ab9dd">
        <defs>
          <Grad id="ms" from="#2f7fe6" to="#63b8fb" />
        </defs>
        <path d="M-3-37c21 0 38 14 38 33S18 30-3 30c-5 0-9 0-13-2-5 5-12 6-20 5 5-4 8-8 7-14C-37 12-41 4-41-4c0-19 17-33 38-33z" fill="url(#ms)" />
        <path d="M15-5c14 0 24 9 24 21 0 7-3 12-8 16 0 4 2 6 5 8-6 0-11-1-14-4-20 2-31-7-31-20S1-5 15-5z" fill="#e8eef7" />
        <g fill="#7fa3cc">
          <circle cx="4" cy="16" r="3.500" />
          <circle cx="15" cy="16" r="3.500" />
          <circle cx="26" cy="16" r="3.500" />
        </g>
      </Item>
      <Item glow="#888">
        <defs>
          <Grad id="ft" from="#e8e8e8" to="#a5a5a5" />
        </defs>
        <rect x="-39" y="-27" width="54" height="54" rx="9" fill="url(#ft)" />
        <path d="M16 0l23-24v48z" fill="url(#ft)" />
        <circle cx="-12" cy="0" r="23" fill="#2c2f33" />
        <circle cx="-12" cy="0" r="20" fill="none" stroke="#777" strokeWidth="1.500" />
        <circle cx="-12" cy="0" r="15" fill="#17345e" />
        <circle cx="-13" cy="-3" r="8" fill="#3f74b8" />
      </Item>
      <Item glow="#c04a3a">
        <rect x="-41" y="-42" width="62" height="83" fill="#d8d8d8" />
        <rect x="-38" y="-34" width="56" height="72" fill="#7c7873" />
        <path d="M-38-34h56v50h-56z" fill="#d2281c" />
        <path d="M-30-34v50M-20-34v50M-10-34v50M0-34v50M10-34v50" stroke="#a31a10" strokeWidth="3" />
        <path d="M-38 38h56v-10h-56z" fill="#dcdcdc" />
        <path d="M-29 19h18M-25 19l-5 18M-15 19l5 18M-28 28h16" stroke="#3c241a" strokeWidth="3" />
        <path d="M15-20l24 11-22 50-22-10z" fill="#fff" />
        <path d="M17-16l17 8-6 13-17-8zM10-1l17 8-6 13-17-8zM2 15l17 8-4 12-17-8z" fill="#2a2220" />
        <circle cx="22" cy="-6" r="5.500" fill="#d8a184" />
        <circle cx="15" cy="9" r="5.500" fill="#d8a184" />
        <circle cx="8" cy="24" r="5.500" fill="#d8a184" />
      </Item>
      <Item glow="#7ba0b5">
        <path d="M-40-30L24-41 32 12-32 28z" fill="#fff" />
        <path d="M-36-27L21-37 28 8-30 22z" fill="#38b3dd" />
        <path d="M-33 5l60-9 1 12-58 14z" fill="#d8cc9a" />
        <path d="M-2 14C0 0 4-10 4-22" stroke="#3b2817" strokeWidth="4" fill="none" />
        <path d="M4-22c-10-8-20-4-24 8 8-6 14-6 22-4-6 4-8 10-8 16 6-4 8-8 12-16 2 6 8 10 16 10-2-8-4-10-12-12 8 0 12 0 16 4-2-10-12-14-22-6z" fill="#163d1e" />
        <rect x="-20" y="0" width="57" height="37" rx="3" fill="#b8babb" />
        <circle cx="12" cy="19" r="17" fill="#e0e0e0" />
        <circle cx="12" cy="19" r="14" fill="#222" />
        <circle cx="12" cy="19" r="8" fill="#1e5c74" />
        <circle cx="9" cy="15" r="3.500" fill="#6cc0dc" />
      </Item>
      <Item glow="#a8d48a">
        <path d="M-40-10L28-24 39 18-30 40z" fill="#e8e8e4" />
        <path d="M-40-10l10-2 10 50-10 2z" fill="#8fd37f" />
        <path d="M-40-10L-10-16l1 8-29 6z" fill="#4ea84a" />
        <path d="M-24 4l14-3 4 20-14 4z" fill="#f0912d" />
        <path d="M-11-16l13-4 6 36-12 5z" fill="#e0503f" />
        <path d="M3-38l15-3 3 52-12 4z" fill="#7b3be0" />
        <path d="M18-24l13-4 3 32-12 4z" fill="#3f9fe8" />
        <path d="M-22 28l56-14M-20 34l56-14" stroke="#b7b7b2" strokeWidth="1.500" />
      </Item>
      <Item glow="#e8b060" open>
        <path d="M-41-26L14-37 22-10-32 34z" fill="#f2b32c" />
        <path d="M-36-30L17-38 26 28-25 37z" fill="#f08c1e" />
        <path d="M-33-14L20-20 26 28-25 37z" fill="#fafafa" />
        <text x="-30" y="-19" fontFamily="Lato, sans-serif" fontWeight="900" fontSize="14" fill="#fff" transform="rotate(-8 -30 -19)">
          PAGES
        </text>
        <path d="M-28-8l40-5M-27-3l12-2M-26 22l36-6M-25 28l32-6" stroke="#999" strokeWidth="1.500" />
        <path d="M-24 2l24-4 1 12-24 4z" fill="#6b2f1c" />
        <path d="M-24 2l24-4 .5 5-24 4z" fill="#e9a14c" />
        <path d="M33-39l7 3L6 26-8 38l2-18z" fill="#f09a1c" />
        <path d="M-8 38l2-15 9 5z" fill="#5b4030" />
      </Item>
      <Item glow="#7da8d0">
        <defs>
          <Grad id="kn" from="#3aa5f5" to="#1659bd" />
        </defs>
        <path d="M-24-17C-22-34-18-40-10-40" stroke="#bcc4cc" strokeWidth="2" fill="none" />
        <path d="M-3 5h5v30h-5z" fill="#9fb0c9" />
        <ellipse cx="0" cy="35" rx="17" ry="6" fill="#b9c6dc" />
        <path d="M-27-27h54l11 26v4h-76v-4z" fill="url(#kn)" />
        <path d="M-16-19h31l3 10h-36z" fill="#eef4f9" />
        <circle cx="7" cy="-14" r="4" fill="#e46b3c" />
      </Item>
      <Item glow="#a8d84a" open>
        <defs>
          <Grad id="sp" from="#a5cf1a" to="#85ad1c" />
        </defs>
        <circle r="39" fill="url(#sp)" />
        <SpotifyMark k={1} />
      </Item>
      <Item glow="#ee5b9a">
        <defs>
          <Grad id="it" from="#ff6a5c" to="#ec1d56" />
        </defs>
        <circle r="37" fill="#f4f4f4" />
        <circle r="33.500" fill="url(#it)" />
        <path d="M-11-16l26-7v34a6.500 6.500 0 1 1-4-6v-18l-18 5v26a6.500 6.500 0 1 1-4-6z" fill="#fff" />
      </Item>
      <Item glow="#f0b060">
        <defs>
          <Grad id="ib" from="#f7a81f" to="#ef7a1f" />
        </defs>
        <circle r="39" fill="#f4f4f4" />
        <circle r="35" fill="url(#ib)" stroke="#a86a28" />
        <path d="M0-14c-6-5-14-6-21-4v30c7-2 15 0 21 4 6-4 14-6 21-4v-30c-7-2-15-1-21 4z" fill="#fff" />
        <path d="M-24-13v29c8-2 17 0 24 4 7-4 16-6 24-4v-29M0-13v28" fill="none" stroke="#6b4526" strokeWidth="1.800" />
      </Item>
      <Item glow="#3fc5ee">
        <defs>
          <Grad id="as" from="#2a5bb0" to="#23a9f5" />
        </defs>
        <circle r="38.500" fill="#e4e6ea" />
        <circle r="34.500" fill="url(#as)" />
        <path d="M-24 5h48v-6h-48z" fill="#d5e6f5" />
        <path d="M2-25L20 18M-2-25L-18 18" stroke="#f3f7fb" strokeWidth="6" />
        <path d="M2-25L20 18" stroke="#9db7d3" strokeWidth="1.500" />
        <Notice x={26} y={-30} />
      </Item>
      <Item glow="#7aaee0" open>
        <circle r="39.500" fill="#fbfbfb" />
        <circle r="33.500" fill="#205081" />
        <g stroke="#fff" strokeWidth="3" fill="none">
          <path d="M-2.500 34V12L-15 0v-10M2.500 34V-20M2.500 12L15 0v-10M-2.500 24h-7l-8-9M2.500 24h7l8-9" />
        </g>
        <g fill="#fff">
          <circle cx="2" cy="-22" r="4" />
          <circle cx="-15" cy="-12" r="4" />
          <circle cx="16" cy="-12" r="4" />
          <circle cx="-18" cy="14" r="4" />
          <circle cx="18" cy="14" r="4" />
          <circle cx="-22" cy="-1" r="3.500" />
          <circle cx="23" cy="-1" r="3.500" />
        </g>
      </Item>
      <Item glow="#777" open>
        <defs>
          <Grad id="su" from="#8a8a8a" to="#454545" />
        </defs>
        <path d="M-34-34h62l10 64q0 4-4 4h-70q-5 0-4-5z" fill="#cfcfcf" />
        <rect x="-34" y="-35" width="68" height="60" rx="5" fill="url(#su)" />
        <text y="13" textAnchor="middle" fontFamily="Lato, sans-serif" fontWeight="900" fontSize="52" fill="#f7932a">
          S
        </text>
      </Item>
      <Item glow="#e8c070" open>
        <ellipse cy="19" rx="38" ry="20" fill="#e9e6de" />
        <path d="M-29-22h58v46c-8 12-50 12-58 0z" fill="#c9cdd2" />
        <path d="M-29-4c8 10 50 10 58 0v6c-8 10-50 10-58 0zM-29 12c8 10 50 10 58 0v6c-8 10-50 10-58 0z" fill="#8b9096" />
        <path d="M-31-20c0-12 14-20 31-20s31 8 31 20v30l-6 20-6-30H-18l-6 30-7-20z" fill="#e3a02a" opacity=".75" />
        <ellipse cy="-20" rx="29" ry="17" fill="#d99527" />
        <rect x="-13" y="-36" width="26" height="17" rx="2" fill="#f8d84a" />
        <path d="M-20 6c10 6 30 6 40 0v10c-10 6-30 6-40 0z" fill="#eef0f2" />
      </Item>
      <Item glow="#555" open>
        <rect x="-39" y="-35" width="79" height="69" fill="#3b3e40" />
        <rect x="-39" y="-35" width="79" height="6" fill="#d5d5d5" />
        <rect x="-39" y="28" width="79" height="6" fill="#8a8a8a" />
        <path d="M-37-29h75v24C8 2-18 12-37 24z" fill="#4c5052" opacity=".6" />
        <text x="-34" y="-6" fontFamily="Liberation Mono, monospace" fontWeight="700" fontSize="22" fill="#17c12c">
          $
        </text>
        <rect x="-18" y="-23" width="10" height="20" fill="#17a82a" />
      </Item>
      <Item glow="#888">
        <rect x="-40" y="-34" width="79" height="68" rx="3" fill="#c6c6c6" />
        <rect x="-35" y="-28" width="69" height="57" fill="#55585a" />
        <Gear />
      </Item>
      <Item glow="#b5d888" open>
        <circle r="37.500" fill="#f7cc2f" />
        <path d="M0 0L-33-18A37.500 37.500 0 0 1 33-18z" fill="#dd4437" />
        <path d="M0 0L-33-18A37.500 37.500 0 0 0-3 37.400L14 9z" fill="#4fae54" />
        <path d="M-33-18A37.500 37.500 0 0 1 33-18H0L-14 8z" fill="#dd4437" />
        <circle r="17" fill="#f3f3f3" />
        <circle r="13.500" fill="#3f86d0" />
      </Item>
      <Item glow="#222" open>
        <defs>
          <Grad id="gp" from="#3c3c3c" to="#070707" />
        </defs>
        <rect x="-43" y="-43" width="86" height="86" rx="6" fill="url(#gp)" />
        <text x="0" y="-1" textAnchor="middle" fontFamily="Roboto, sans-serif" fontSize="17" fill="#fff" textLength="68" lengthAdjust="spacingAndGlyphs">
          GoPro
        </text>
        <path d="M-35 3h15v11h-15zM-17.500 3h15v11h-15z" fill="#25b4ea" />
        <path d="M0 3h15v11H0z" fill="#1676c4" />
        <path d="M17.500 3h15v11h-15z" fill="#fff" />
      </Item>
      <Item glow="#999">
        <path d="M-37-30L21-40 28 4-30 14z" fill="#fff" />
        <path d="M-33-27L18-36 22-8-28 4z" fill="#a8946a" />
        <path d="M-41-8L16-36 34 8-18 36z" fill="#fafafa" />
        <path d="M-35-6L14-30 29 6-16 30z" fill="#7fa6da" />
        <path d="M-22 18L24-4l5 10-45 24z" fill="#56749c" />
        <path d="M-16-4c4-6 14-8 18-2l8 18-20 12z" fill="#1c2434" />
        <circle cx="-7" cy="-12" r="7" fill="#b98460" />
        <circle cx="22" cy="16" r="16" fill="#bfc1c3" stroke="#8d8f92" />
        <circle cx="21" cy="-1" r="15" fill="#2b2d31" />
        <circle cx="21" cy="-1" r="10" fill="#e8eaec" />
        <circle cx="21" cy="-1" r="6" fill="#b9bdc2" />
      </Item>
      <DockGap>
        <i />
      </DockGap>
      <Item glow="#666">
        <rect x="-41" y="-32" width="81" height="64" fill="#060606" />
        <rect x="-41" y="-32" width="81" height="4" fill="#ddd" />
        <path d="M-38-22h40M-38-16h62M-38-10h50M-38-4h66M-38 2h44M-38 8h60M-38 14h30M-38 20h48M-38 26h36" stroke="#888" strokeWidth="1.500" strokeDasharray="6 2 3 2" />
        <rect x="10" y="13" width="30" height="25" fill="#26292b" stroke="#aaa" />
        <text x="12" y="26" fontFamily="Liberation Mono, monospace" fontSize="11" fill="#17c12c">
          $
        </text>
        <rect x="19" y="17" width="5" height="10" fill="#17a82a" />
      </Item>
      <Item glow="#a8d84a">
        <rect x="-41" y="-27" width="81" height="54" fill="#1b1e22" />
        <rect x="-41" y="-22" width="81" height="3" fill="#2891b8" />
        <rect x="-18" y="-18" width="56" height="14" fill="#39403a" />
        <path d="M-36-14h14M-36-8h10M-36-2h14M-16 2h40M-16 8h40M-16 14h30" stroke="#555" strokeWidth="2" />
        <rect x="-18" y="18" width="36" height="7" fill="#eee" />
        <path d="M-28 4h8v8h-8z" fill="#8ab82c" />
        <circle cx="25" cy="26" r="15" fill="#9cc71c" />
        <g transform="translate(25 26)">
          <SpotifyMark k={0.38} />
        </g>
      </Item>
      <Item glow="#888">
        <path d="M-31-34h62l-6 68c-6 9-44 9-50 0z" fill="#8b9095" />
        <g stroke="#3c4044" strokeWidth="2">
          <path d="M-29-20L20 36M-28-6L10 36M-18-30L25 20M-4-30L27 6M10-30L29-8M-26 10L0 36" />
          <path d="M29-20L-20 36M28-6L-10 36M18-30L-25 20M4-30L-27 6M-10-30L-29-8M26 10L0 36" />
        </g>
        <path d="M-26 30c8 7 44 7 52 0v5c-8 8-44 8-52 0z" fill="#d7dade" />
        <ellipse cy="-32" rx="32" ry="8" fill="#4a4e52" stroke="#d7dade" strokeWidth="3.500" />
        <path d="M-20-30l7-8 10 3 7-6 9 5 6 6-12 7h-18z" fill="#f1f2f4" />
      </Item>
    </DockRow>
  </DockArea>
);

export default function App() {
  return (
    <Desktop>
      <GlobalStyle />
      <TopMenu />
      <Window>
        <BrowserChrome />
        <AdminPage />
      </Window>
      <Dock />
    </Desktop>
  );
}
